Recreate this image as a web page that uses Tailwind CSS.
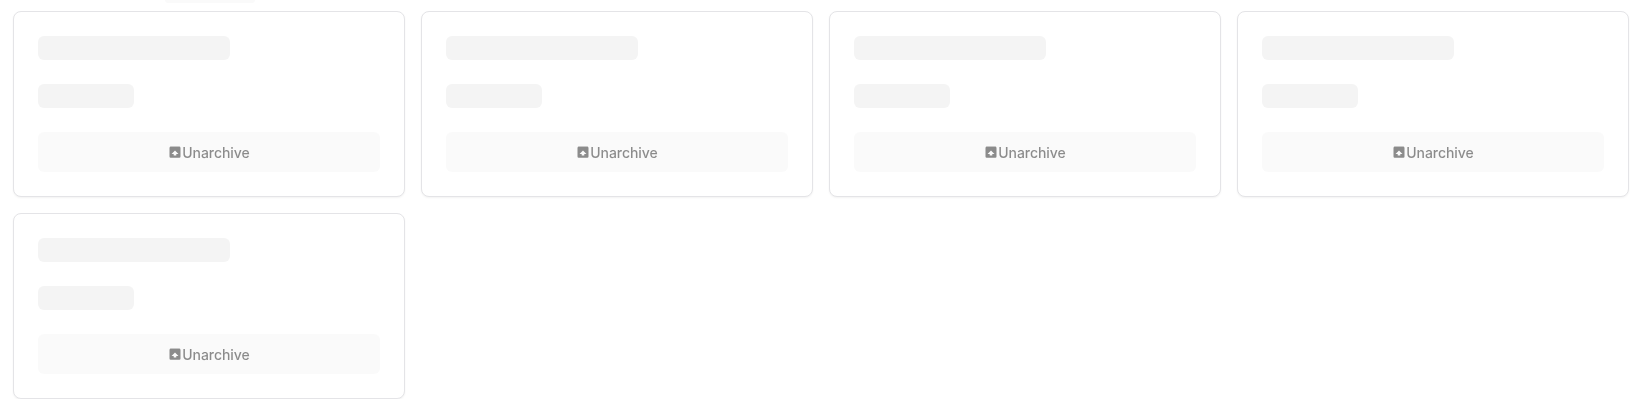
<!DOCTYPE html>
<html lang="en"><head><meta charset="utf-8"><title>Archive</title>
<script src="https://cdn.jsdelivr.net/npm/@tailwindcss/browser@4"></script></head>
<body class="bg-white overflow-hidden font-['Inter',sans-serif]">
<div class="h-[3px] flex pl-[165px]"><div class="h-[3px] w-[90px] rounded-b-[3px] bg-[#fafafa]"></div></div>
<main id="grid" class="mt-2 grid grid-cols-4 gap-4 pl-[13px] pr-[11px]"></main>
<template id="card">
<div class="rounded-lg border border-[#e4e4e7] bg-white p-6 shadow-[0_1px_2px_rgba(0,0,0,0.05)]">
<div class="h-6 w-48 rounded-md bg-[#f4f4f4]"></div>
<div class="mt-6 h-6 w-24 rounded-md bg-[#f4f4f4]"></div>
<button class="mt-6 flex h-10 w-full items-center justify-center rounded-md bg-[#f5f5f5] text-sm font-medium tracking-[-0.05px] text-[#171717] opacity-50 will-change-transform">
<svg class="mb-px -ml-px size-[15px]" viewBox="0 0 15 15" fill="currentColor"><path opacity=".45" d="M3.3 2h9.4l.5 1H2.8z"/><path d="M2.5 3.7q0-.7.7-.7h9.6q.7 0 .7.7v8.8q0 1.2-1.2 1.2H3.7q-1.2 0-1.2-1.2zM8 6.5L4.5 10H6.7v1.4h2.6V10h2.2z"/></svg><span class="pt-px">Unarchive</span></button>
</div>
</template>
<script>for(let i=0;i<5;i++)document.getElementById('grid').append(document.getElementById('card').content.cloneNode(true))</script>
</body></html>
